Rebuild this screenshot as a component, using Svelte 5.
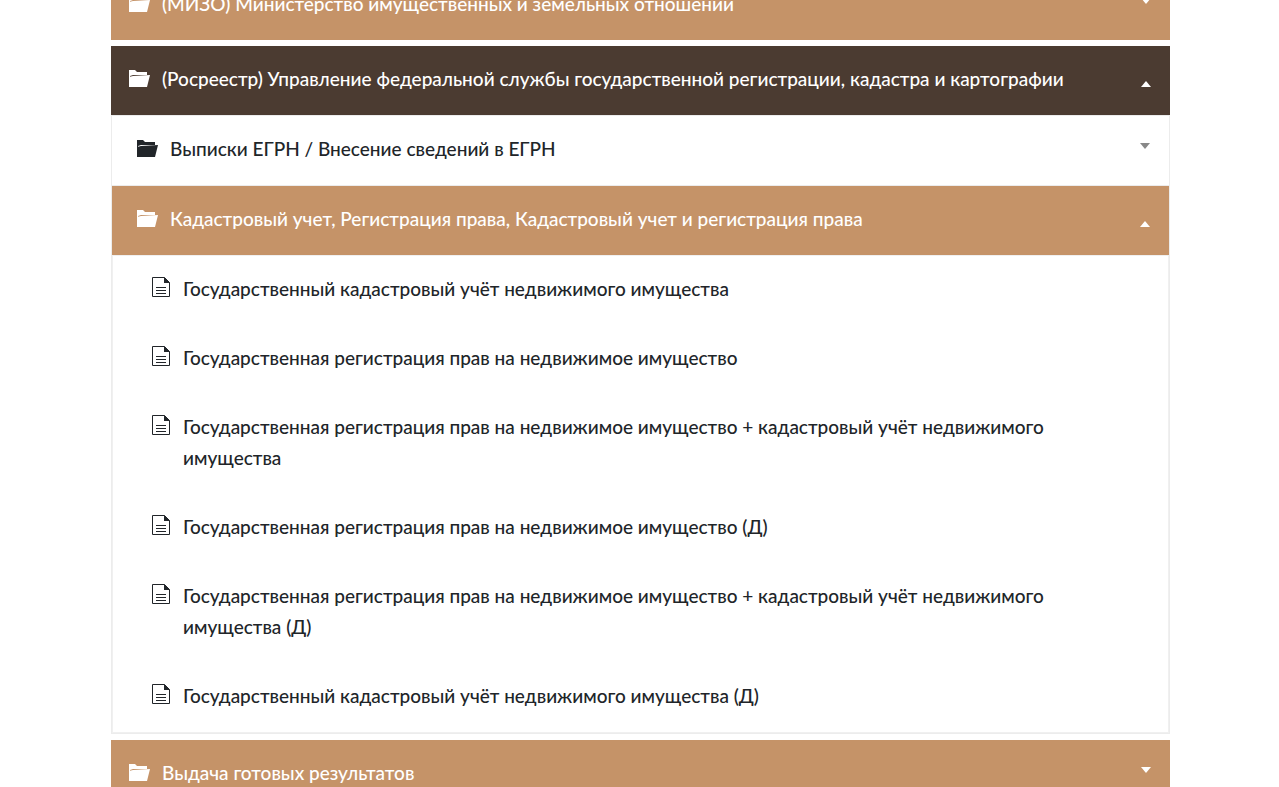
<script>
	let sections = $state([
		{ title: '(МИЗО) Министерство имущественных и земельных отношений', open: false, groups: [] },
		{
			title: '(Росреестр) Управление федеральной службы государственной регистрации, кадастра и картографии',
			open: true,
			groups: [
				{ title: 'Выписки ЕГРН / Внесение сведений в ЕГРН', open: false, services: [] },
				{
					title: 'Кадастровый учет, Регистрация права, Кадастровый учет и регистрация права',
					open: true,
					services: [
						'Государственный кадастровый учёт недвижимого имущества',
						'Государственная регистрация прав на недвижимое имущество',
						'Государственная регистрация прав на недвижимое имущество + кадастровый учёт недвижимого имущества',
						'Государственная регистрация прав на недвижимое имущество (Д)',
						'Государственная регистрация прав на недвижимое имущество + кадастровый учёт недвижимого имущества (Д)',
						'Государственный кадастровый учёт недвижимого имущества (Д)'
					]
				}
			]
		},
		{ title: 'Выдача готовых результатов', open: false, groups: [] }
	]);
</script>

{#snippet folder()}
	<svg class="icon" viewBox="0 0 21 17" aria-hidden="true">
		<path d="M0 0h6l2 2h10v3H4L1 6v11H0z" />
		<path d="M4 6l17-1-3 12H0V7z" />
	</svg>
{/snippet}

{#snippet arrow(open)}
	<svg class="arrow" viewBox="0 0 10 14" aria-hidden="true">
		<path d={open ? 'M0 14h10L5 8z' : 'M0 0h10L5 6z'} />
	</svg>
{/snippet}

<main class="page">
	<div class="accordion">
		{#each sections as section}
			<section>
				<button class="head" class:active={section.open} aria-expanded={section.open} onclick={() => (section.open = !section.open)}>
					{@render folder()}
					<span class="title">{section.title}</span>
					{@render arrow(section.open)}
				</button>

				{#if section.open && section.groups.length}
					<div class="panel">
						{#each section.groups as group}
							<button class="head sub" class:active={group.open} aria-expanded={group.open} onclick={() => (group.open = !group.open)}>
								{@render folder()}
								<span class="title">{group.title}</span>
								{@render arrow(group.open)}
							</button>

							{#if group.open && group.services.length}
								<ul class="services">
									{#each group.services as service}
										<li>
											<a href="#service">
												<svg class="icon" viewBox="0 0 20 20" aria-hidden="true">
													<path class="line" d="M1.5.5h12l5 5v14h-17z" />
													<path d="M13 0l6 6h-6z" />
													<path class="line" d="M5 10.500h10M5 13.500h10M5 16.500h10" />
												</svg>
												<span>{service}</span>
											</a>
										</li>
									{/each}
								</ul>
							{/if}
						{/each}
					</div>
				{/if}
			</section>
		{/each}
	</div>
</main>

<style>
	:global(body) {
		margin: 0;
		background: #fff;
	}

	.page {
		height: 100vh;
		overflow: hidden;
		box-sizing: border-box;
		padding: 0 109px 0 111px;
		font-family: Lato, 'Open Sans', sans-serif;
		font-size: 19px;
		font-weight: 500;
		line-height: 31px;
		color: #212529;
	}

	/* The list is scrolled part of the way past its first heading */
	.accordion {
		display: flex;
		flex-direction: column;
		gap: 6px;
		margin-top: -29px;
	}

	/* ===== Headings ===== */
	.head {
		display: flex;
		align-items: center;
		gap: 12px;
		width: 100%;
		padding: 17px 19px 21px 18px;
		border: 0;
		background: #c59368;
		color: #fff;
		font: inherit;
		text-align: left;
		cursor: pointer;
	}

	.head.active {
		background: #4b3b31;
	}

	.title {
		flex: 1;
	}

	.icon {
		flex: none;
		width: 21px;
		height: 17px;
		fill: currentColor;
	}

	.arrow {
		flex: none;
		width: 10px;
		height: 14px;
		margin-top: 2px;
		fill: currentColor;
	}

	/* ===== Nested groups ===== */
	.panel {
		border: 1px solid #ececec;
	}

	.head.sub {
		padding-left: 25px;
		background: #fff;
		color: #212529;
	}

	.head.sub:not(:last-child) {
		border-bottom: 1px solid #ececec;
	}

	.head.sub.active {
		border-bottom: 0;
		background: #c59368;
		color: #fff;
	}

	.sub:not(.active) .arrow {
		fill: #888;
	}

	/* ===== Services ===== */
	.services {
		margin: 0;
		padding: 0;
		list-style: none;
		border: 1px solid #f0f0f0;
	}

	.services a {
		display: flex;
		align-items: flex-start;
		gap: 12px;
		padding: 17px 100px 21px 38px;
		color: inherit;
		text-decoration: none;
	}

	.services .icon {
		width: 20px;
		height: 20px;
		margin-top: 4px;
	}

	.services .line {
		fill: none;
		stroke: currentColor;
	}
</style>
